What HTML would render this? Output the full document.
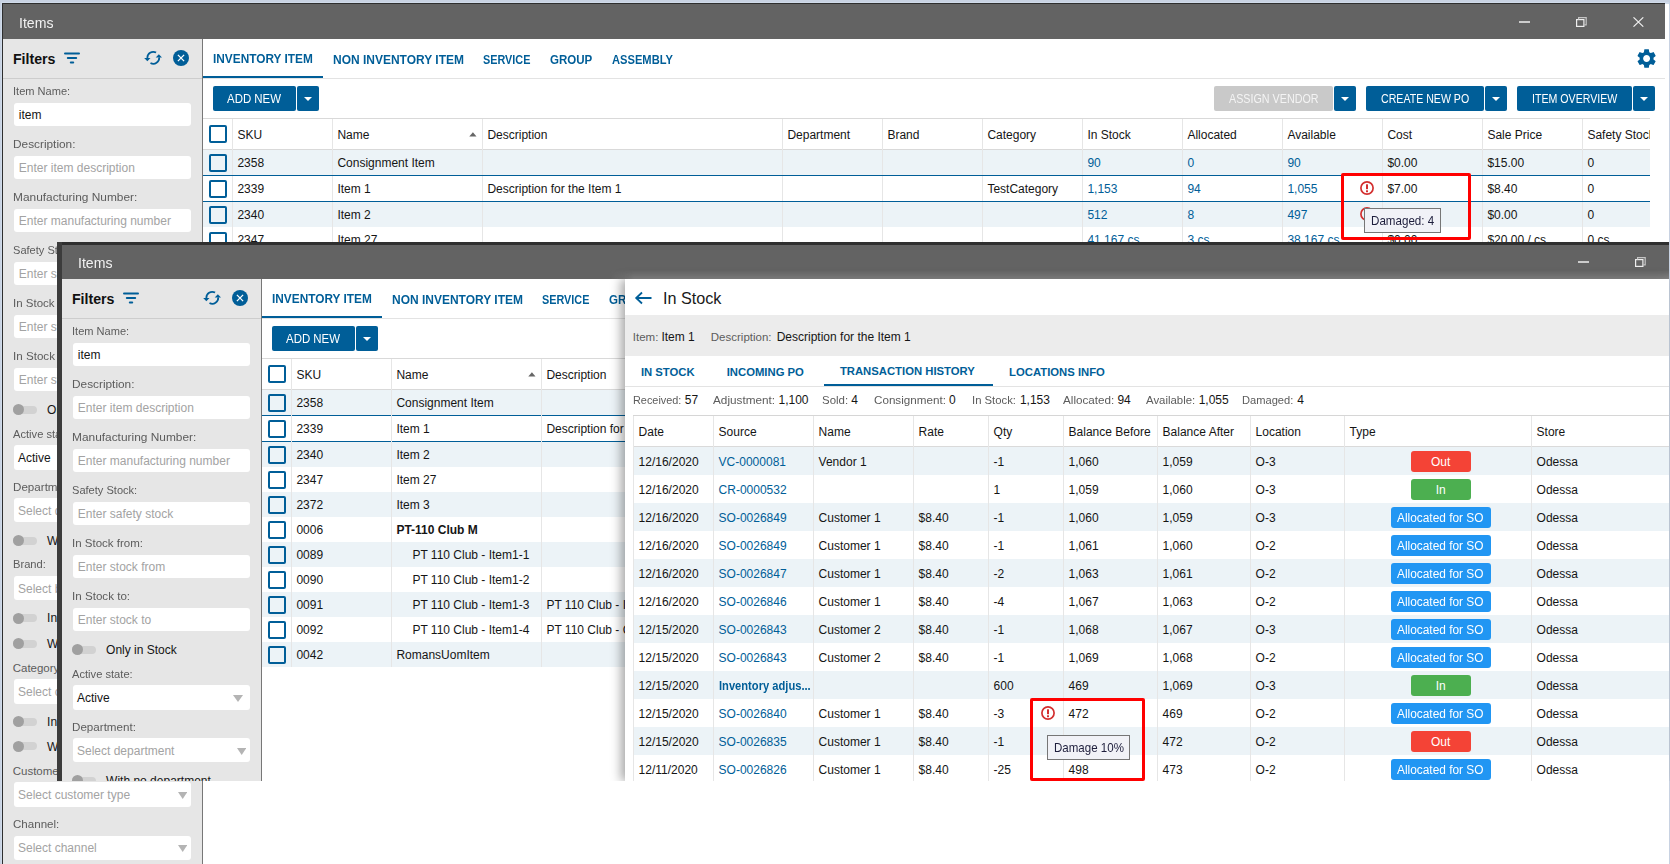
<!DOCTYPE html><html><head><meta charset="utf-8"><title>Items</title><style>
*{margin:0;padding:0;box-sizing:content-box}
html,body{width:1670px;height:864px;overflow:hidden;background:#c8d2e2;font-family:"Liberation Sans",sans-serif}
.r{position:absolute}
.t{position:absolute;white-space:nowrap;font-family:"Liberation Sans",sans-serif}
</style></head><body>
<div class="r" style="left:1px;top:2px;width:1668px;height:1px;background:#d0dbea;"></div>
<div class="r" style="left:1px;top:2px;width:1px;height:862px;background:#d0dbea;"></div>
<div class="r" style="left:2px;top:3px;width:1667px;height:861px;background:#ffffff;"></div>
<div class="r" style="left:2px;top:3px;width:1663px;height:36px;background:#636363;box-sizing:border-box;border-top:1px solid #2e2e2e;"></div>
<div class="r" style="left:2px;top:3px;width:1px;height:861px;background:#2e2e2e;"></div>
<div class="r" style="left:1665px;top:3px;width:4px;height:1px;background:#d0dbea;"></div>
<div class="t" style="left:18.90px;top:14.68px;font-size:14.6px;line-height:17.52px;color:#f2f2f2;transform:scaleX(0.9667);transform-origin:0 0;">Items</div>
<div class="r" style="left:1519.3px;top:21.2px;width:10.5px;height:1.4px;background:#cccccc;"></div>
<svg class="r" style="left:1576px;top:17px" width="11" height="10"><rect x="0.6" y="2.6" width="7.3" height="6.8" fill="none" stroke="#eeeeee" stroke-width="1.2"/><path d="M2.6 2.4 V0.6 H10.2 V7.8 H8.2" fill="none" stroke="#c4c4c4" stroke-width="1.2"/></svg>
<svg class="r" style="left:1633.3px;top:17px" width="11" height="10"><path d="M0.5 0.3 L10.3 9.7 M10.3 0.3 L0.5 9.7" stroke="#f0f0f0" stroke-width="1.1"/></svg>
<div class="r" style="left:3px;top:39px;width:199px;height:825px;background:#e6e6e6;"></div>
<div class="r" style="left:202px;top:39px;width:1px;height:825px;background:#777777;"></div>
<div class="t" style="left:12.90px;top:51.06px;font-size:14.2px;line-height:17.04px;color:#111;font-weight:700;">Filters</div>
<svg class="r" style="left:63px;top:51px" width="18" height="14"><g stroke="#005e98" stroke-width="2" stroke-linecap="round"><line x1="2" y1="2.6" x2="16" y2="2.6"/><line x1="4.8" y1="7" x2="13.2" y2="7"/><line x1="7.8" y1="11.4" x2="10.2" y2="11.4"/></g></svg>
<svg class="r" style="left:143px;top:50px" width="20" height="17"><g fill="none" stroke="#005e98" stroke-width="1.75"><path d="M13.1 2.55 A5.9 5.9 0 0 0 4.4 8.2"/><path d="M7.5 13.0 A5.9 5.9 0 0 0 16.2 7.3"/></g><polygon points="1.2,8.0 7.5,8.0 4.35,11.3" fill="#005e98"/><polygon points="12.7,7.6 19,7.6 15.85,4.3" fill="#005e98"/></svg>
<svg class="r" style="left:173px;top:50px" width="16" height="16"><circle cx="8" cy="8" r="8" fill="#005e98"/><path d="M4.9 4.9 L11.1 11.1 M11.1 4.9 L4.9 11.1" stroke="#fff" stroke-width="1.3"/></svg>
<div class="r" style="left:3px;top:78px;width:199px;height:1px;background:#cdcdcd;"></div>
<div class="t" style="left:12.70px;top:84.62px;font-size:11.5px;line-height:13.8px;color:#5c5c5c;transform:scaleX(0.9624);transform-origin:0 0;">Item Name:</div>
<div class="r" style="left:14px;top:103px;width:177px;height:23px;background:#fff;border-radius:3px;"></div>
<div class="t" style="left:18.80px;top:108.14px;font-size:12px;line-height:14.4px;color:#151515;">item</div>
<div class="t" style="left:12.70px;top:137.62px;font-size:11.5px;line-height:13.8px;color:#5c5c5c;transform:scaleX(1.0293);transform-origin:0 0;">Description:</div>
<div class="r" style="left:14px;top:156px;width:177px;height:23px;background:#fff;border-radius:3px;"></div>
<div class="t" style="left:18.80px;top:161.14px;font-size:12px;line-height:14.4px;color:#a3a3a3;">Enter item description</div>
<div class="t" style="left:12.70px;top:190.62px;font-size:11.5px;line-height:13.8px;color:#5c5c5c;transform:scaleX(1.0344);transform-origin:0 0;">Manufacturing Number:</div>
<div class="r" style="left:14px;top:209px;width:177px;height:23px;background:#fff;border-radius:3px;"></div>
<div class="t" style="left:18.80px;top:214.14px;font-size:12px;line-height:14.4px;color:#a3a3a3;">Enter manufacturing number</div>
<div class="t" style="left:12.70px;top:243.62px;font-size:11.5px;line-height:13.8px;color:#5c5c5c;transform:scaleX(0.9621);transform-origin:0 0;">Safety Stock:</div>
<div class="r" style="left:14px;top:262px;width:177px;height:23px;background:#fff;border-radius:3px;"></div>
<div class="t" style="left:18.80px;top:267.14px;font-size:12px;line-height:14.4px;color:#a3a3a3;">Enter safety stock</div>
<div class="t" style="left:12.70px;top:296.62px;font-size:11.5px;line-height:13.8px;color:#5c5c5c;transform:scaleX(1.0009);transform-origin:0 0;">In Stock from:</div>
<div class="r" style="left:14px;top:315px;width:177px;height:23px;background:#fff;border-radius:3px;"></div>
<div class="t" style="left:18.80px;top:320.14px;font-size:12px;line-height:14.4px;color:#a3a3a3;">Enter stock from</div>
<div class="t" style="left:12.70px;top:349.62px;font-size:11.5px;line-height:13.8px;color:#5c5c5c;transform:scaleX(1.0099);transform-origin:0 0;">In Stock to:</div>
<div class="r" style="left:14px;top:368px;width:177px;height:23px;background:#fff;border-radius:3px;"></div>
<div class="t" style="left:18.80px;top:373.14px;font-size:12px;line-height:14.4px;color:#a3a3a3;">Enter stock to</div>
<div class="r" style="left:13px;top:405.8px;width:24px;height:8px;background:#d2d2d2;border-radius:4px;"></div>
<div class="r" style="left:13px;top:404.3px;width:11px;height:11px;background:#a0a0a0;border-radius:50%;"></div>
<div class="t" style="left:47.10px;top:403.14px;font-size:12px;line-height:14.4px;color:#151515;">Only in Stock</div>
<div class="t" style="left:12.70px;top:427.62px;font-size:11.5px;line-height:13.8px;color:#5c5c5c;transform:scaleX(0.9690);transform-origin:0 0;">Active state:</div>
<div class="r" style="left:14px;top:445.3px;width:177px;height:24.3px;background:#fff;border-radius:3px;"></div>
<div class="t" style="left:18.00px;top:451.14px;font-size:12px;line-height:14.4px;color:#151515;">Active</div>
<svg class="r" style="left:174.2px;top:454.55px" width="10" height="7"><polygon points="0,0 10,0 5.0,7" fill="#b4b4b4"/></svg>
<div class="t" style="left:12.70px;top:480.62px;font-size:11.5px;line-height:13.8px;color:#5c5c5c;transform:scaleX(1.0098);transform-origin:0 0;">Department:</div>
<div class="r" style="left:14px;top:498.4px;width:177px;height:24px;background:#fff;border-radius:3px;"></div>
<div class="t" style="left:18.00px;top:504.14px;font-size:12px;line-height:14.4px;color:#a3a3a3;">Select department</div>
<svg class="r" style="left:177.8px;top:507.5px" width="9.4" height="7"><polygon points="0,0 9.4,0 4.7,7" fill="#b4b4b4"/></svg>
<div class="r" style="left:13px;top:536.5px;width:24px;height:8px;background:#d2d2d2;border-radius:4px;"></div>
<div class="r" style="left:13px;top:535.0px;width:11px;height:11px;background:#a0a0a0;border-radius:50%;"></div>
<div class="t" style="left:47.10px;top:534.14px;font-size:12px;line-height:14.4px;color:#151515;">With no department</div>
<div class="t" style="left:12.70px;top:557.62px;font-size:11.5px;line-height:13.8px;color:#5c5c5c;transform:scaleX(0.9708);transform-origin:0 0;">Brand:</div>
<div class="r" style="left:14px;top:576.2px;width:177px;height:24.2px;background:#fff;border-radius:3px;"></div>
<div class="t" style="left:18.00px;top:582.14px;font-size:12px;line-height:14.4px;color:#a3a3a3;">Select brand</div>
<svg class="r" style="left:177.8px;top:585.4000000000001px" width="9.4" height="7"><polygon points="0,0 9.4,0 4.7,7" fill="#b4b4b4"/></svg>
<div class="r" style="left:13px;top:614.3px;width:24px;height:8px;background:#d2d2d2;border-radius:4px;"></div>
<div class="r" style="left:13px;top:612.8px;width:11px;height:11px;background:#a0a0a0;border-radius:50%;"></div>
<div class="t" style="left:47.10px;top:611.14px;font-size:12px;line-height:14.4px;color:#151515;">Include inactive brands</div>
<div class="r" style="left:13px;top:639.5px;width:24px;height:8px;background:#d2d2d2;border-radius:4px;"></div>
<div class="r" style="left:13px;top:638.0px;width:11px;height:11px;background:#a0a0a0;border-radius:50%;"></div>
<div class="t" style="left:47.10px;top:637.14px;font-size:12px;line-height:14.4px;color:#151515;">With no brand</div>
<div class="t" style="left:12.70px;top:661.62px;font-size:11.5px;line-height:13.8px;color:#5c5c5c;">Category:</div>
<div class="r" style="left:14px;top:679.3px;width:177px;height:24.3px;background:#fff;border-radius:3px;"></div>
<div class="t" style="left:18.00px;top:685.14px;font-size:12px;line-height:14.4px;color:#a3a3a3;">Select category</div>
<svg class="r" style="left:177.8px;top:688.55px" width="9.4" height="7"><polygon points="0,0 9.4,0 4.7,7" fill="#b4b4b4"/></svg>
<div class="r" style="left:13px;top:717.7px;width:24px;height:8px;background:#d2d2d2;border-radius:4px;"></div>
<div class="r" style="left:13px;top:716.2px;width:11px;height:11px;background:#a0a0a0;border-radius:50%;"></div>
<div class="t" style="left:47.10px;top:715.14px;font-size:12px;line-height:14.4px;color:#151515;">Include inactive categories</div>
<div class="r" style="left:13px;top:742.4px;width:24px;height:8px;background:#d2d2d2;border-radius:4px;"></div>
<div class="r" style="left:13px;top:740.9px;width:11px;height:11px;background:#a0a0a0;border-radius:50%;"></div>
<div class="t" style="left:47.10px;top:740.14px;font-size:12px;line-height:14.4px;color:#151515;">With no category</div>
<div class="t" style="left:12.70px;top:764.62px;font-size:11.5px;line-height:13.8px;color:#5c5c5c;">Customer type:</div>
<div class="r" style="left:14px;top:782.3px;width:177px;height:24.3px;background:#fff;border-radius:3px;"></div>
<div class="t" style="left:18.00px;top:788.14px;font-size:12px;line-height:14.4px;color:#a3a3a3;">Select customer type</div>
<svg class="r" style="left:177.8px;top:791.55px" width="9.4" height="7"><polygon points="0,0 9.4,0 4.7,7" fill="#b4b4b4"/></svg>
<div class="t" style="left:12.70px;top:817.62px;font-size:11.5px;line-height:13.8px;color:#5c5c5c;transform:scaleX(1.0055);transform-origin:0 0;">Channel:</div>
<div class="r" style="left:14px;top:835.6px;width:177px;height:24.2px;background:#fff;border-radius:3px;"></div>
<div class="t" style="left:18.00px;top:841.14px;font-size:12px;line-height:14.4px;color:#a3a3a3;">Select channel</div>
<svg class="r" style="left:177.8px;top:844.8000000000001px" width="9.4" height="7"><polygon points="0,0 9.4,0 4.7,7" fill="#b4b4b4"/></svg>
<div class="t" style="left:212.90px;top:51.86px;font-size:12.3px;line-height:14.76px;color:#005e98;font-weight:700;transform:scaleX(0.9629);transform-origin:0 0;">INVENTORY ITEM</div>
<div class="t" style="left:332.80px;top:52.86px;font-size:12.3px;line-height:14.76px;color:#005e98;font-weight:700;transform:scaleX(0.9749);transform-origin:0 0;">NON INVENTORY ITEM</div>
<div class="t" style="left:483.20px;top:52.86px;font-size:12.3px;line-height:14.76px;color:#005e98;font-weight:700;transform:scaleX(0.8816);transform-origin:0 0;">SERVICE</div>
<div class="t" style="left:549.70px;top:52.86px;font-size:12.3px;line-height:14.76px;color:#005e98;font-weight:700;transform:scaleX(0.9380);transform-origin:0 0;">GROUP</div>
<div class="t" style="left:611.70px;top:52.86px;font-size:12.3px;line-height:14.76px;color:#005e98;font-weight:700;transform:scaleX(0.9062);transform-origin:0 0;">ASSEMBLY</div>
<div class="r" style="left:203px;top:78px;width:1462px;height:1px;background:#e3e3e3;"></div>
<div class="r" style="left:203px;top:75.8px;width:120px;height:2.5px;background:#005e98;"></div>
<svg class="r" style="left:1635px;top:46.7px" width="23.2" height="23.2" viewBox="0 0 24 24"><path fill="#005e98" d="M19.14 12.94c.04-.3.06-.61.06-.94 0-.32-.02-.64-.07-.94l2.03-1.58c.18-.14.23-.41.12-.61l-1.92-3.32c-.12-.22-.37-.29-.59-.22l-2.39.96c-.5-.38-1.03-.7-1.62-.94l-.36-2.54c-.04-.24-.24-.41-.48-.41h-3.84c-.24 0-.43.17-.47.41l-.36 2.54c-.59.24-1.13.57-1.62.94l-2.39-.96c-.22-.08-.47 0-.59.22L2.74 8.87c-.12.21-.08.47.12.61l2.03 1.58c-.05.3-.09.63-.09.94s.02.64.07.94l-2.03 1.58c-.18.14-.23.41-.12.61l1.92 3.32c.12.22.37.29.59.22l2.39-.96c.5.38 1.03.7 1.62.94l.36 2.54c.05.24.24.41.48.41h3.84c.24 0 .44-.17.47-.41l.36-2.54c.59-.24 1.13-.56 1.62-.94l2.39.96c.22.08.47 0 .59-.22l1.92-3.32c.12-.22.07-.47-.12-.61l-2.01-1.58zM12 15.6c-1.98 0-3.6-1.62-3.6-3.6s1.62-3.6 3.6-3.6 3.6 1.62 3.6 3.6-1.62 3.6-3.6 3.6z"/></svg>
<div class="r" style="left:213px;top:86px;width:83px;height:25px;background:#005e98;border-radius:2px;"></div>
<div class="t" style="left:227.40px;top:91.95px;font-size:12.2px;line-height:14.64px;color:#fff;transform:scaleX(0.9381);transform-origin:0 0;">ADD NEW</div>
<div class="r" style="left:297.2px;top:86px;width:21.80000000000001px;height:25px;background:#005e98;border-radius:2px;"></div>
<svg class="r" style="left:304.1px;top:97.0px" width="8" height="4"><polygon points="0,0 8,0 4.0,4" fill="#fff"/></svg>
<div class="r" style="left:1214px;top:86px;width:118.5px;height:25px;background:#c9c9c9;border-radius:2px;"></div>
<div class="t" style="left:1229.00px;top:91.95px;font-size:12.2px;line-height:14.64px;color:#f4f4f4;transform:scaleX(0.8819);transform-origin:0 0;">ASSIGN VENDOR</div>
<div class="r" style="left:1333.7px;top:86px;width:22.299999999999955px;height:25px;background:#005e98;border-radius:2px;"></div>
<svg class="r" style="left:1340.85px;top:97.0px" width="8" height="4"><polygon points="0,0 8,0 4.0,4" fill="#fff"/></svg>
<div class="r" style="left:1366px;top:86px;width:118px;height:25px;background:#005e98;border-radius:2px;"></div>
<div class="t" style="left:1381.00px;top:91.95px;font-size:12.2px;line-height:14.64px;color:#fff;transform:scaleX(0.8703);transform-origin:0 0;">CREATE NEW PO</div>
<div class="r" style="left:1485.2px;top:86px;width:21.799999999999955px;height:25px;background:#005e98;border-radius:2px;"></div>
<svg class="r" style="left:1492.1px;top:97.0px" width="8" height="4"><polygon points="0,0 8,0 4.0,4" fill="#fff"/></svg>
<div class="r" style="left:1517px;top:86px;width:115px;height:25px;background:#005e98;border-radius:2px;"></div>
<div class="t" style="left:1531.50px;top:91.95px;font-size:12.2px;line-height:14.64px;color:#fff;transform:scaleX(0.8717);transform-origin:0 0;">ITEM OVERVIEW</div>
<div class="r" style="left:1633.2px;top:86px;width:21.799999999999955px;height:25px;background:#005e98;border-radius:2px;"></div>
<svg class="r" style="left:1640.1px;top:97.0px" width="8" height="4"><polygon points="0,0 8,0 4.0,4" fill="#fff"/></svg>
<div class="r" style="left:203px;top:150px;width:1447px;height:25px;background:#ecf3f7;"></div>
<div class="r" style="left:203px;top:202px;width:1447px;height:25px;background:#ecf3f7;"></div>
<div class="r" style="left:203px;top:118px;width:1447px;height:1px;background:#d9d9d9;"></div>
<div class="r" style="left:203px;top:149px;width:1447px;height:1px;background:#d9d9d9;"></div>
<div class="r" style="left:232px;top:119px;width:1px;height:123px;background:#e6e6e6;"></div>
<div class="r" style="left:332px;top:119px;width:1px;height:123px;background:#e6e6e6;"></div>
<div class="r" style="left:482px;top:119px;width:1px;height:123px;background:#e6e6e6;"></div>
<div class="r" style="left:782px;top:119px;width:1px;height:123px;background:#e6e6e6;"></div>
<div class="r" style="left:882px;top:119px;width:1px;height:123px;background:#e6e6e6;"></div>
<div class="r" style="left:982px;top:119px;width:1px;height:123px;background:#e6e6e6;"></div>
<div class="r" style="left:1082px;top:119px;width:1px;height:123px;background:#e6e6e6;"></div>
<div class="r" style="left:1182px;top:119px;width:1px;height:123px;background:#e6e6e6;"></div>
<div class="r" style="left:1282px;top:119px;width:1px;height:123px;background:#e6e6e6;"></div>
<div class="r" style="left:1382px;top:119px;width:1px;height:123px;background:#e6e6e6;"></div>
<div class="r" style="left:1482px;top:119px;width:1px;height:123px;background:#e6e6e6;"></div>
<div class="r" style="left:1582px;top:119px;width:1px;height:123px;background:#e6e6e6;"></div>
<svg class="r" style="left:469px;top:131.8px" width="8" height="5"><polygon points="0.3,4.6 7.5,4.6 3.9,0.2" fill="#666"/></svg>
<div class="r" style="left:203px;top:175px;width:1447px;height:1px;background:#005e98;"></div>
<div class="r" style="left:203px;top:201px;width:1447px;height:1px;background:#005e98;"></div>
<div class="r" style="left:209px;top:125px;width:14px;height:14px;border:2px solid #005e98;border-radius:2px;background:transparent"></div>
<div class="r" style="left:209px;top:154px;width:14px;height:14px;border:2px solid #005e98;border-radius:2px;background:transparent"></div>
<div class="r" style="left:209px;top:180px;width:14px;height:14px;border:2px solid #005e98;border-radius:2px;background:transparent"></div>
<div class="r" style="left:209px;top:206px;width:14px;height:14px;border:2px solid #005e98;border-radius:2px;background:transparent"></div>
<div class="r" style="left:209px;top:232px;width:14px;height:14px;border:2px solid #005e98;border-radius:2px;background:transparent"></div>
<div class="r" style="left:203px;top:119px;width:1447px;height:123px;overflow:hidden;">
<div class="t" style="left:34.40px;top:9.14px;font-size:12px;line-height:14.4px;color:#151515;">SKU</div>
<div class="t" style="left:134.40px;top:9.14px;font-size:12px;line-height:14.4px;color:#151515;">Name</div>
<div class="t" style="left:284.40px;top:9.14px;font-size:12px;line-height:14.4px;color:#151515;">Description</div>
<div class="t" style="left:584.40px;top:9.14px;font-size:12px;line-height:14.4px;color:#151515;">Department</div>
<div class="t" style="left:684.40px;top:9.14px;font-size:12px;line-height:14.4px;color:#151515;">Brand</div>
<div class="t" style="left:784.40px;top:9.14px;font-size:12px;line-height:14.4px;color:#151515;">Category</div>
<div class="t" style="left:884.40px;top:9.14px;font-size:12px;line-height:14.4px;color:#151515;">In Stock</div>
<div class="t" style="left:984.40px;top:9.14px;font-size:12px;line-height:14.4px;color:#151515;">Allocated</div>
<div class="t" style="left:1084.40px;top:9.14px;font-size:12px;line-height:14.4px;color:#151515;">Available</div>
<div class="t" style="left:1184.40px;top:9.14px;font-size:12px;line-height:14.4px;color:#151515;">Cost</div>
<div class="t" style="left:1284.40px;top:9.14px;font-size:12px;line-height:14.4px;color:#151515;">Sale Price</div>
<div class="t" style="left:1384.40px;top:9.14px;font-size:12px;line-height:14.4px;color:#151515;">Safety Stock</div>
<div class="t" style="left:34.40px;top:37.14px;font-size:12px;line-height:14.4px;color:#151515;">2358</div>
<div class="t" style="left:134.40px;top:37.14px;font-size:12px;line-height:14.4px;color:#151515;">Consignment Item</div>
<div class="t" style="left:884.40px;top:37.14px;font-size:12px;line-height:14.4px;color:#005e98;">90</div>
<div class="t" style="left:984.40px;top:37.14px;font-size:12px;line-height:14.4px;color:#005e98;">0</div>
<div class="t" style="left:1084.40px;top:37.14px;font-size:12px;line-height:14.4px;color:#005e98;">90</div>
<div class="t" style="left:1184.40px;top:37.14px;font-size:12px;line-height:14.4px;color:#151515;">$0.00</div>
<div class="t" style="left:1284.40px;top:37.14px;font-size:12px;line-height:14.4px;color:#151515;">$15.00</div>
<div class="t" style="left:1384.40px;top:37.14px;font-size:12px;line-height:14.4px;color:#151515;">0</div>
<div class="t" style="left:34.40px;top:63.14px;font-size:12px;line-height:14.4px;color:#151515;">2339</div>
<div class="t" style="left:134.40px;top:63.14px;font-size:12px;line-height:14.4px;color:#151515;">Item 1</div>
<div class="t" style="left:284.40px;top:63.14px;font-size:12px;line-height:14.4px;color:#151515;">Description for the Item 1</div>
<div class="t" style="left:784.40px;top:63.14px;font-size:12px;line-height:14.4px;color:#151515;">TestCategory</div>
<div class="t" style="left:884.40px;top:63.14px;font-size:12px;line-height:14.4px;color:#005e98;">1,153</div>
<div class="t" style="left:984.40px;top:63.14px;font-size:12px;line-height:14.4px;color:#005e98;">94</div>
<div class="t" style="left:1084.40px;top:63.14px;font-size:12px;line-height:14.4px;color:#005e98;">1,055</div>
<div class="t" style="left:1184.40px;top:63.14px;font-size:12px;line-height:14.4px;color:#151515;">$7.00</div>
<div class="t" style="left:1284.40px;top:63.14px;font-size:12px;line-height:14.4px;color:#151515;">$8.40</div>
<div class="t" style="left:1384.40px;top:63.14px;font-size:12px;line-height:14.4px;color:#151515;">0</div>
<div class="t" style="left:34.40px;top:89.14px;font-size:12px;line-height:14.4px;color:#151515;">2340</div>
<div class="t" style="left:134.40px;top:89.14px;font-size:12px;line-height:14.4px;color:#151515;">Item 2</div>
<div class="t" style="left:884.40px;top:89.14px;font-size:12px;line-height:14.4px;color:#005e98;">512</div>
<div class="t" style="left:984.40px;top:89.14px;font-size:12px;line-height:14.4px;color:#005e98;">8</div>
<div class="t" style="left:1084.40px;top:89.14px;font-size:12px;line-height:14.4px;color:#005e98;">497</div>
<div class="t" style="left:1184.40px;top:89.14px;font-size:12px;line-height:14.4px;color:#151515;">$0.00</div>
<div class="t" style="left:1284.40px;top:89.14px;font-size:12px;line-height:14.4px;color:#151515;">$0.00</div>
<div class="t" style="left:1384.40px;top:89.14px;font-size:12px;line-height:14.4px;color:#151515;">0</div>
<div class="t" style="left:34.40px;top:114.14px;font-size:12px;line-height:14.4px;color:#151515;">2347</div>
<div class="t" style="left:134.40px;top:114.14px;font-size:12px;line-height:14.4px;color:#151515;">Item 27</div>
<div class="t" style="left:884.40px;top:114.14px;font-size:12px;line-height:14.4px;color:#005e98;">41,167 cs</div>
<div class="t" style="left:984.40px;top:114.14px;font-size:12px;line-height:14.4px;color:#005e98;">3 cs</div>
<div class="t" style="left:1084.40px;top:114.14px;font-size:12px;line-height:14.4px;color:#005e98;">38,167 cs</div>
<div class="t" style="left:1184.40px;top:114.14px;font-size:12px;line-height:14.4px;color:#151515;">$0.00</div>
<div class="t" style="left:1284.40px;top:114.14px;font-size:12px;line-height:14.4px;color:#151515;">$20.00 / cs</div>
<div class="t" style="left:1384.40px;top:114.14px;font-size:12px;line-height:14.4px;color:#151515;">0 cs</div>
</div>
<svg class="r" style="left:1358.6px;top:180.4px" width="16" height="16"><circle cx="8" cy="8" r="6.1" fill="none" stroke="#d32f2f" stroke-width="1.7"/><rect x="7" y="4.3" width="2" height="4.9" fill="#d32f2f"/><rect x="7" y="10.3" width="2" height="1.9" fill="#d32f2f"/></svg>
<svg class="r" style="left:1358.6px;top:206.4px" width="16" height="16"><circle cx="8" cy="8" r="6.1" fill="none" stroke="#d32f2f" stroke-width="1.7"/><rect x="7" y="4.3" width="2" height="4.9" fill="#d32f2f"/><rect x="7" y="10.3" width="2" height="1.9" fill="#d32f2f"/></svg>
<div class="r" style="left:0px;top:0px;width:1670px;height:781px;overflow:hidden;">
<div class="r" style="left:57px;top:242px;width:1612px;height:539px;background:#ffffff;"></div>
<div class="r" style="left:57px;top:242px;width:1612px;height:3px;background:#2f2f2f;"></div>
<div class="r" style="left:57px;top:242px;width:5px;height:539px;background:#3c3c3c;"></div>
<div class="r" style="left:62px;top:245px;width:1607px;height:34px;background:#636363;"></div>
<div class="t" style="left:77.90px;top:254.68px;font-size:14.6px;line-height:17.52px;color:#f2f2f2;transform:scaleX(0.9667);transform-origin:0 0;">Items</div>
<div class="r" style="left:1578px;top:261.2px;width:10.5px;height:1.4px;background:#cccccc;"></div>
<svg class="r" style="left:1635px;top:257px" width="11" height="10"><rect x="0.6" y="2.6" width="7.3" height="6.8" fill="none" stroke="#eeeeee" stroke-width="1.2"/><path d="M2.6 2.4 V0.6 H10.2 V7.8 H8.2" fill="none" stroke="#c4c4c4" stroke-width="1.2"/></svg>
<div class="r" style="left:62px;top:279px;width:199px;height:502px;background:#e6e6e6;"></div>
<div class="r" style="left:261px;top:279px;width:1px;height:502px;background:#777777;"></div>
<div class="t" style="left:71.90px;top:291.06px;font-size:14.2px;line-height:17.04px;color:#111;font-weight:700;">Filters</div>
<svg class="r" style="left:122px;top:291px" width="18" height="14"><g stroke="#005e98" stroke-width="2" stroke-linecap="round"><line x1="2" y1="2.6" x2="16" y2="2.6"/><line x1="4.8" y1="7" x2="13.2" y2="7"/><line x1="7.8" y1="11.4" x2="10.2" y2="11.4"/></g></svg>
<svg class="r" style="left:202px;top:290px" width="20" height="17"><g fill="none" stroke="#005e98" stroke-width="1.75"><path d="M13.1 2.55 A5.9 5.9 0 0 0 4.4 8.2"/><path d="M7.5 13.0 A5.9 5.9 0 0 0 16.2 7.3"/></g><polygon points="1.2,8.0 7.5,8.0 4.35,11.3" fill="#005e98"/><polygon points="12.7,7.6 19,7.6 15.85,4.3" fill="#005e98"/></svg>
<svg class="r" style="left:232px;top:290px" width="16" height="16"><circle cx="8" cy="8" r="8" fill="#005e98"/><path d="M4.9 4.9 L11.1 11.1 M11.1 4.9 L4.9 11.1" stroke="#fff" stroke-width="1.3"/></svg>
<div class="r" style="left:62px;top:318px;width:199px;height:1px;background:#cdcdcd;"></div>
<div class="t" style="left:71.70px;top:324.62px;font-size:11.5px;line-height:13.8px;color:#5c5c5c;transform:scaleX(0.9624);transform-origin:0 0;">Item Name:</div>
<div class="r" style="left:73px;top:343px;width:177px;height:23px;background:#fff;border-radius:3px;"></div>
<div class="t" style="left:77.80px;top:348.14px;font-size:12px;line-height:14.4px;color:#151515;">item</div>
<div class="t" style="left:71.70px;top:377.62px;font-size:11.5px;line-height:13.8px;color:#5c5c5c;transform:scaleX(1.0293);transform-origin:0 0;">Description:</div>
<div class="r" style="left:73px;top:396px;width:177px;height:23px;background:#fff;border-radius:3px;"></div>
<div class="t" style="left:77.80px;top:401.14px;font-size:12px;line-height:14.4px;color:#a3a3a3;">Enter item description</div>
<div class="t" style="left:71.70px;top:430.62px;font-size:11.5px;line-height:13.8px;color:#5c5c5c;transform:scaleX(1.0344);transform-origin:0 0;">Manufacturing Number:</div>
<div class="r" style="left:73px;top:449px;width:177px;height:23px;background:#fff;border-radius:3px;"></div>
<div class="t" style="left:77.80px;top:454.14px;font-size:12px;line-height:14.4px;color:#a3a3a3;">Enter manufacturing number</div>
<div class="t" style="left:71.70px;top:483.62px;font-size:11.5px;line-height:13.8px;color:#5c5c5c;transform:scaleX(0.9621);transform-origin:0 0;">Safety Stock:</div>
<div class="r" style="left:73px;top:502px;width:177px;height:23px;background:#fff;border-radius:3px;"></div>
<div class="t" style="left:77.80px;top:507.14px;font-size:12px;line-height:14.4px;color:#a3a3a3;">Enter safety stock</div>
<div class="t" style="left:71.70px;top:536.62px;font-size:11.5px;line-height:13.8px;color:#5c5c5c;transform:scaleX(1.0009);transform-origin:0 0;">In Stock from:</div>
<div class="r" style="left:73px;top:555px;width:177px;height:23px;background:#fff;border-radius:3px;"></div>
<div class="t" style="left:77.80px;top:560.14px;font-size:12px;line-height:14.4px;color:#a3a3a3;">Enter stock from</div>
<div class="t" style="left:71.70px;top:589.62px;font-size:11.5px;line-height:13.8px;color:#5c5c5c;transform:scaleX(1.0099);transform-origin:0 0;">In Stock to:</div>
<div class="r" style="left:73px;top:608px;width:177px;height:23px;background:#fff;border-radius:3px;"></div>
<div class="t" style="left:77.80px;top:613.14px;font-size:12px;line-height:14.4px;color:#a3a3a3;">Enter stock to</div>
<div class="r" style="left:72px;top:645.8px;width:24px;height:8px;background:#d2d2d2;border-radius:4px;"></div>
<div class="r" style="left:72px;top:644.3px;width:11px;height:11px;background:#a0a0a0;border-radius:50%;"></div>
<div class="t" style="left:106.10px;top:643.14px;font-size:12px;line-height:14.4px;color:#151515;">Only in Stock</div>
<div class="t" style="left:71.70px;top:667.62px;font-size:11.5px;line-height:13.8px;color:#5c5c5c;transform:scaleX(0.9690);transform-origin:0 0;">Active state:</div>
<div class="r" style="left:73px;top:685.3px;width:177px;height:24.3px;background:#fff;border-radius:3px;"></div>
<div class="t" style="left:77.00px;top:691.14px;font-size:12px;line-height:14.4px;color:#151515;">Active</div>
<svg class="r" style="left:233.2px;top:694.55px" width="10" height="7"><polygon points="0,0 10,0 5.0,7" fill="#b4b4b4"/></svg>
<div class="t" style="left:71.70px;top:720.62px;font-size:11.5px;line-height:13.8px;color:#5c5c5c;transform:scaleX(1.0098);transform-origin:0 0;">Department:</div>
<div class="r" style="left:73px;top:738.4px;width:177px;height:24px;background:#fff;border-radius:3px;"></div>
<div class="t" style="left:77.00px;top:744.14px;font-size:12px;line-height:14.4px;color:#a3a3a3;">Select department</div>
<svg class="r" style="left:236.8px;top:747.5px" width="9.4" height="7"><polygon points="0,0 9.4,0 4.7,7" fill="#b4b4b4"/></svg>
<div class="r" style="left:72px;top:776.5px;width:24px;height:8px;background:#d2d2d2;border-radius:4px;"></div>
<div class="r" style="left:72px;top:775.0px;width:11px;height:11px;background:#a0a0a0;border-radius:50%;"></div>
<div class="t" style="left:106.10px;top:774.14px;font-size:12px;line-height:14.4px;color:#151515;">With no department</div>
<div class="t" style="left:71.70px;top:797.62px;font-size:11.5px;line-height:13.8px;color:#5c5c5c;transform:scaleX(0.9708);transform-origin:0 0;">Brand:</div>
<div class="r" style="left:73px;top:816.2px;width:177px;height:24.2px;background:#fff;border-radius:3px;"></div>
<div class="t" style="left:77.00px;top:822.14px;font-size:12px;line-height:14.4px;color:#a3a3a3;">Select brand</div>
<svg class="r" style="left:236.8px;top:825.4000000000001px" width="9.4" height="7"><polygon points="0,0 9.4,0 4.7,7" fill="#b4b4b4"/></svg>
<div class="r" style="left:72px;top:854.3px;width:24px;height:8px;background:#d2d2d2;border-radius:4px;"></div>
<div class="r" style="left:72px;top:852.8px;width:11px;height:11px;background:#a0a0a0;border-radius:50%;"></div>
<div class="t" style="left:106.10px;top:851.14px;font-size:12px;line-height:14.4px;color:#151515;">Include inactive brands</div>
<div class="r" style="left:72px;top:879.5px;width:24px;height:8px;background:#d2d2d2;border-radius:4px;"></div>
<div class="r" style="left:72px;top:878.0px;width:11px;height:11px;background:#a0a0a0;border-radius:50%;"></div>
<div class="t" style="left:106.10px;top:877.14px;font-size:12px;line-height:14.4px;color:#151515;">With no brand</div>
<div class="t" style="left:71.70px;top:901.62px;font-size:11.5px;line-height:13.8px;color:#5c5c5c;">Category:</div>
<div class="r" style="left:73px;top:919.3px;width:177px;height:24.3px;background:#fff;border-radius:3px;"></div>
<div class="t" style="left:77.00px;top:925.14px;font-size:12px;line-height:14.4px;color:#a3a3a3;">Select category</div>
<svg class="r" style="left:236.8px;top:928.55px" width="9.4" height="7"><polygon points="0,0 9.4,0 4.7,7" fill="#b4b4b4"/></svg>
<div class="r" style="left:72px;top:957.7px;width:24px;height:8px;background:#d2d2d2;border-radius:4px;"></div>
<div class="r" style="left:72px;top:956.2px;width:11px;height:11px;background:#a0a0a0;border-radius:50%;"></div>
<div class="t" style="left:106.10px;top:955.14px;font-size:12px;line-height:14.4px;color:#151515;">Include inactive categories</div>
<div class="r" style="left:72px;top:982.4px;width:24px;height:8px;background:#d2d2d2;border-radius:4px;"></div>
<div class="r" style="left:72px;top:980.9px;width:11px;height:11px;background:#a0a0a0;border-radius:50%;"></div>
<div class="t" style="left:106.10px;top:980.14px;font-size:12px;line-height:14.4px;color:#151515;">With no category</div>
<div class="t" style="left:71.70px;top:1004.62px;font-size:11.5px;line-height:13.8px;color:#5c5c5c;">Customer type:</div>
<div class="r" style="left:73px;top:1022.3px;width:177px;height:24.3px;background:#fff;border-radius:3px;"></div>
<div class="t" style="left:77.00px;top:1028.14px;font-size:12px;line-height:14.4px;color:#a3a3a3;">Select customer type</div>
<svg class="r" style="left:236.8px;top:1031.55px" width="9.4" height="7"><polygon points="0,0 9.4,0 4.7,7" fill="#b4b4b4"/></svg>
<div class="t" style="left:71.70px;top:1057.62px;font-size:11.5px;line-height:13.8px;color:#5c5c5c;transform:scaleX(1.0055);transform-origin:0 0;">Channel:</div>
<div class="r" style="left:73px;top:1075.6px;width:177px;height:24.2px;background:#fff;border-radius:3px;"></div>
<div class="t" style="left:77.00px;top:1081.14px;font-size:12px;line-height:14.4px;color:#a3a3a3;">Select channel</div>
<svg class="r" style="left:236.8px;top:1084.7999999999997px" width="9.4" height="7"><polygon points="0,0 9.4,0 4.7,7" fill="#b4b4b4"/></svg>
<div class="t" style="left:271.90px;top:291.86px;font-size:12.3px;line-height:14.76px;color:#005e98;font-weight:700;transform:scaleX(0.9629);transform-origin:0 0;">INVENTORY ITEM</div>
<div class="t" style="left:391.80px;top:292.86px;font-size:12.3px;line-height:14.76px;color:#005e98;font-weight:700;transform:scaleX(0.9749);transform-origin:0 0;">NON INVENTORY ITEM</div>
<div class="t" style="left:542.20px;top:292.86px;font-size:12.3px;line-height:14.76px;color:#005e98;font-weight:700;transform:scaleX(0.8816);transform-origin:0 0;">SERVICE</div>
<div class="t" style="left:608.70px;top:292.86px;font-size:12.3px;line-height:14.76px;color:#005e98;font-weight:700;transform:scaleX(0.9380);transform-origin:0 0;">GROUP</div>
<div class="r" style="left:262px;top:318px;width:400px;height:1px;background:#e3e3e3;"></div>
<div class="r" style="left:262px;top:315.8px;width:120px;height:2.5px;background:#005e98;"></div>
<div class="r" style="left:272px;top:326px;width:83px;height:25px;background:#005e98;border-radius:2px;"></div>
<div class="t" style="left:286.40px;top:331.95px;font-size:12.2px;line-height:14.64px;color:#fff;transform:scaleX(0.9381);transform-origin:0 0;">ADD NEW</div>
<div class="r" style="left:356.2px;top:326px;width:21.80000000000001px;height:25px;background:#005e98;border-radius:2px;"></div>
<svg class="r" style="left:363.1px;top:337.0px" width="8" height="4"><polygon points="0,0 8,0 4.0,4" fill="#fff"/></svg>
<div class="r" style="left:262px;top:390px;width:363px;height:25px;background:#ecf3f7;"></div>
<div class="r" style="left:262px;top:442px;width:363px;height:25px;background:#ecf3f7;"></div>
<div class="r" style="left:262px;top:492px;width:363px;height:25px;background:#ecf3f7;"></div>
<div class="r" style="left:262px;top:542px;width:363px;height:25px;background:#ecf3f7;"></div>
<div class="r" style="left:262px;top:592px;width:363px;height:25px;background:#ecf3f7;"></div>
<div class="r" style="left:262px;top:642px;width:363px;height:25px;background:#ecf3f7;"></div>
<div class="r" style="left:262px;top:358px;width:363px;height:1px;background:#d9d9d9;"></div>
<div class="r" style="left:262px;top:389px;width:363px;height:1px;background:#d9d9d9;"></div>
<div class="r" style="left:262px;top:415px;width:363px;height:1px;background:#005e98;"></div>
<div class="r" style="left:262px;top:441px;width:363px;height:1px;background:#005e98;"></div>
<div class="r" style="left:291px;top:359px;width:1px;height:308px;background:#e6e6e6;"></div>
<div class="r" style="left:391px;top:359px;width:1px;height:308px;background:#e6e6e6;"></div>
<div class="r" style="left:541px;top:359px;width:1px;height:308px;background:#e6e6e6;"></div>
<div class="r" style="left:841px;top:359px;width:1px;height:308px;background:#e6e6e6;"></div>
<div class="r" style="left:268px;top:365px;width:14px;height:14px;border:2px solid #005e98;border-radius:2px;background:transparent"></div>
<svg class="r" style="left:528px;top:371.8px" width="8" height="5"><polygon points="0.3,4.6 7.5,4.6 3.9,0.2" fill="#666"/></svg>
<div class="r" style="left:268px;top:394px;width:14px;height:14px;border:2px solid #005e98;border-radius:2px;background:transparent"></div>
<div class="r" style="left:268px;top:420px;width:14px;height:14px;border:2px solid #005e98;border-radius:2px;background:transparent"></div>
<div class="r" style="left:268px;top:446px;width:14px;height:14px;border:2px solid #005e98;border-radius:2px;background:transparent"></div>
<div class="r" style="left:268px;top:471px;width:14px;height:14px;border:2px solid #005e98;border-radius:2px;background:transparent"></div>
<div class="r" style="left:268px;top:496px;width:14px;height:14px;border:2px solid #005e98;border-radius:2px;background:transparent"></div>
<div class="r" style="left:268px;top:521px;width:14px;height:14px;border:2px solid #005e98;border-radius:2px;background:transparent"></div>
<div class="r" style="left:268px;top:546px;width:14px;height:14px;border:2px solid #005e98;border-radius:2px;background:transparent"></div>
<div class="r" style="left:268px;top:571px;width:14px;height:14px;border:2px solid #005e98;border-radius:2px;background:transparent"></div>
<div class="r" style="left:268px;top:596px;width:14px;height:14px;border:2px solid #005e98;border-radius:2px;background:transparent"></div>
<div class="r" style="left:268px;top:621px;width:14px;height:14px;border:2px solid #005e98;border-radius:2px;background:transparent"></div>
<div class="r" style="left:268px;top:646px;width:14px;height:14px;border:2px solid #005e98;border-radius:2px;background:transparent"></div>
<div class="t" style="left:296.40px;top:368.14px;font-size:12px;line-height:14.4px;color:#151515;">SKU</div>
<div class="t" style="left:396.40px;top:368.14px;font-size:12px;line-height:14.4px;color:#151515;">Name</div>
<div class="t" style="left:546.40px;top:368.14px;font-size:12px;line-height:14.4px;color:#151515;">Description</div>
<div class="t" style="left:296.40px;top:396.14px;font-size:12px;line-height:14.4px;color:#151515;">2358</div>
<div class="t" style="left:396.40px;top:396.14px;font-size:12px;line-height:14.4px;color:#151515;">Consignment Item</div>
<div class="t" style="left:296.40px;top:422.14px;font-size:12px;line-height:14.4px;color:#151515;">2339</div>
<div class="t" style="left:396.40px;top:422.14px;font-size:12px;line-height:14.4px;color:#151515;">Item 1</div>
<div class="t" style="left:546.40px;top:422.14px;font-size:12px;line-height:14.4px;color:#151515;">Description for the Item 1</div>
<div class="t" style="left:296.40px;top:448.14px;font-size:12px;line-height:14.4px;color:#151515;">2340</div>
<div class="t" style="left:396.40px;top:448.14px;font-size:12px;line-height:14.4px;color:#151515;">Item 2</div>
<div class="t" style="left:296.40px;top:473.14px;font-size:12px;line-height:14.4px;color:#151515;">2347</div>
<div class="t" style="left:396.40px;top:473.14px;font-size:12px;line-height:14.4px;color:#151515;">Item 27</div>
<div class="t" style="left:296.40px;top:498.14px;font-size:12px;line-height:14.4px;color:#151515;">2372</div>
<div class="t" style="left:396.40px;top:498.14px;font-size:12px;line-height:14.4px;color:#151515;">Item 3</div>
<div class="t" style="left:296.40px;top:523.14px;font-size:12px;line-height:14.4px;color:#151515;">0006</div>
<div class="t" style="left:396.40px;top:523.14px;font-size:12px;line-height:14.4px;color:#151515;font-weight:700;">PT-110 Club M</div>
<div class="t" style="left:296.40px;top:548.14px;font-size:12px;line-height:14.4px;color:#151515;">0089</div>
<div class="t" style="left:412.40px;top:548.14px;font-size:12px;line-height:14.4px;color:#151515;">PT 110 Club - Item1-1</div>
<div class="t" style="left:296.40px;top:573.14px;font-size:12px;line-height:14.4px;color:#151515;">0090</div>
<div class="t" style="left:412.40px;top:573.14px;font-size:12px;line-height:14.4px;color:#151515;">PT 110 Club - Item1-2</div>
<div class="t" style="left:296.40px;top:598.14px;font-size:12px;line-height:14.4px;color:#151515;">0091</div>
<div class="t" style="left:412.40px;top:598.14px;font-size:12px;line-height:14.4px;color:#151515;">PT 110 Club - Item1-3</div>
<div class="t" style="left:546.40px;top:598.14px;font-size:12px;line-height:14.4px;color:#151515;">PT 110 Club - Item1-3</div>
<div class="t" style="left:296.40px;top:623.14px;font-size:12px;line-height:14.4px;color:#151515;">0092</div>
<div class="t" style="left:412.40px;top:623.14px;font-size:12px;line-height:14.4px;color:#151515;">PT 110 Club - Item1-4</div>
<div class="t" style="left:546.40px;top:623.14px;font-size:12px;line-height:14.4px;color:#151515;">PT 110 Club - Component</div>
<div class="t" style="left:296.40px;top:648.14px;font-size:12px;line-height:14.4px;color:#151515;">0042</div>
<div class="t" style="left:396.40px;top:648.14px;font-size:12px;line-height:14.4px;color:#151515;">RomansUomItem</div>
<div class="r" style="left:625px;top:279px;width:1044px;height:502px;background:#fff;box-shadow:-4px 0 10px rgba(0,0,0,0.35)"></div>
<div class="r" style="left:610px;top:270px;width:1059px;height:9px;background:linear-gradient(to bottom, rgba(150,150,150,0), rgba(150,150,150,0.6));-webkit-mask-image:linear-gradient(to right, transparent 0px, #000 24px);mask-image:linear-gradient(to right, transparent 0px, #000 24px);"></div>
<div class="r" style="left:625px;top:279px;width:1044px;height:502px;background:#fff;"></div>
<svg class="r" style="left:634px;top:291px" width="19" height="14"><path d="M17.5 7 H2.5 M8 1.5 L2.2 7 L8 12.5" fill="none" stroke="#005e98" stroke-width="1.8"/></svg>
<div class="t" style="left:662.90px;top:289.17px;font-size:16.2px;line-height:19.44px;color:#1a1a1a;">In Stock</div>
<div class="r" style="left:625px;top:315px;width:1044px;height:41px;background:#ececec;"></div>
<div class="t" style="left:632.80px;top:330.62px;font-size:11.5px;line-height:13.8px;color:#5c5c5c;">Item:</div>
<div class="t" style="left:661.40px;top:330.14px;font-size:12px;line-height:14.4px;color:#151515;">Item 1</div>
<div class="t" style="left:710.80px;top:330.62px;font-size:11.5px;line-height:13.8px;color:#5c5c5c;">Description:</div>
<div class="t" style="left:776.70px;top:330.14px;font-size:12px;line-height:14.4px;color:#151515;">Description for the Item 1</div>
<div class="t" style="left:640.90px;top:365.80px;font-size:11.3px;line-height:13.56px;color:#005e98;font-weight:700;">IN STOCK</div>
<div class="t" style="left:726.70px;top:365.80px;font-size:11.3px;line-height:13.56px;color:#005e98;font-weight:700;">INCOMING PO</div>
<div class="t" style="left:839.90px;top:364.80px;font-size:11.3px;line-height:13.56px;color:#005e98;font-weight:700;">TRANSACTION HISTORY</div>
<div class="t" style="left:1009.10px;top:365.80px;font-size:11.3px;line-height:13.56px;color:#005e98;font-weight:700;">LOCATIONS INFO</div>
<div class="r" style="left:625px;top:386px;width:1044px;height:1px;background:#e3e3e3;"></div>
<div class="r" style="left:824px;top:383.7px;width:169px;height:2.5px;background:#005e98;"></div>
<div class="t" style="left:632.50px;top:393.62px;font-size:11.5px;line-height:13.8px;color:#5c5c5c;transform:scaleX(0.9464);transform-origin:0 0;">Received:</div>
<div class="t" style="left:684.80px;top:393.14px;font-size:12px;line-height:14.4px;color:#151515;">57</div>
<div class="t" style="left:712.50px;top:393.62px;font-size:11.5px;line-height:13.8px;color:#5c5c5c;transform:scaleX(1.0225);transform-origin:0 0;">Adjustment:</div>
<div class="t" style="left:778.50px;top:393.14px;font-size:12px;line-height:14.4px;color:#151515;">1,100</div>
<div class="t" style="left:821.80px;top:393.62px;font-size:11.5px;line-height:13.8px;color:#5c5c5c;transform:scaleX(0.9955);transform-origin:0 0;">Sold:</div>
<div class="t" style="left:851.30px;top:393.14px;font-size:12px;line-height:14.4px;color:#151515;">4</div>
<div class="t" style="left:874.10px;top:393.62px;font-size:11.5px;line-height:13.8px;color:#5c5c5c;transform:scaleX(1.0131);transform-origin:0 0;">Consignment:</div>
<div class="t" style="left:949.10px;top:393.14px;font-size:12px;line-height:14.4px;color:#151515;">0</div>
<div class="t" style="left:971.70px;top:393.62px;font-size:11.5px;line-height:13.8px;color:#5c5c5c;transform:scaleX(0.9832);transform-origin:0 0;">In Stock:</div>
<div class="t" style="left:1019.90px;top:393.14px;font-size:12px;line-height:14.4px;color:#151515;">1,153</div>
<div class="t" style="left:1062.50px;top:393.62px;font-size:11.5px;line-height:13.8px;color:#5c5c5c;transform:scaleX(1.0155);transform-origin:0 0;">Allocated:</div>
<div class="t" style="left:1117.40px;top:393.14px;font-size:12px;line-height:14.4px;color:#151515;">94</div>
<div class="t" style="left:1145.70px;top:393.62px;font-size:11.5px;line-height:13.8px;color:#5c5c5c;transform:scaleX(0.9908);transform-origin:0 0;">Available:</div>
<div class="t" style="left:1198.70px;top:393.14px;font-size:12px;line-height:14.4px;color:#151515;">1,055</div>
<div class="t" style="left:1242.10px;top:393.62px;font-size:11.5px;line-height:13.8px;color:#5c5c5c;transform:scaleX(0.9668);transform-origin:0 0;">Damaged:</div>
<div class="t" style="left:1297.20px;top:393.14px;font-size:12px;line-height:14.4px;color:#151515;">4</div>
<div class="r" style="left:633px;top:415px;width:1036px;height:1px;background:#d6d6d6;"></div>
<div class="r" style="left:633px;top:446px;width:1036px;height:1px;background:#dadada;"></div>
<div class="r" style="left:633px;top:447px;width:1036px;height:28px;background:#ecf3f7;"></div>
<div class="r" style="left:633px;top:503px;width:1036px;height:28px;background:#ecf3f7;"></div>
<div class="r" style="left:633px;top:559px;width:1036px;height:28px;background:#ecf3f7;"></div>
<div class="r" style="left:633px;top:615px;width:1036px;height:28px;background:#ecf3f7;"></div>
<div class="r" style="left:633px;top:671px;width:1036px;height:28px;background:#ecf3f7;"></div>
<div class="r" style="left:633px;top:727px;width:1036px;height:28px;background:#ecf3f7;"></div>
<div class="r" style="left:633px;top:416px;width:1px;height:365px;background:#e6e6e6;"></div>
<div class="r" style="left:713px;top:416px;width:1px;height:365px;background:#e6e6e6;"></div>
<div class="r" style="left:813px;top:416px;width:1px;height:365px;background:#e6e6e6;"></div>
<div class="r" style="left:913px;top:416px;width:1px;height:365px;background:#e6e6e6;"></div>
<div class="r" style="left:988px;top:416px;width:1px;height:365px;background:#e6e6e6;"></div>
<div class="r" style="left:1063px;top:416px;width:1px;height:365px;background:#e6e6e6;"></div>
<div class="r" style="left:1157px;top:416px;width:1px;height:365px;background:#e6e6e6;"></div>
<div class="r" style="left:1250px;top:416px;width:1px;height:365px;background:#e6e6e6;"></div>
<div class="r" style="left:1344px;top:416px;width:1px;height:365px;background:#e6e6e6;"></div>
<div class="r" style="left:1531px;top:416px;width:1px;height:365px;background:#e6e6e6;"></div>
<div class="t" style="left:638.60px;top:425.14px;font-size:12px;line-height:14.4px;color:#151515;">Date</div>
<div class="t" style="left:718.60px;top:425.14px;font-size:12px;line-height:14.4px;color:#151515;">Source</div>
<div class="t" style="left:818.60px;top:425.14px;font-size:12px;line-height:14.4px;color:#151515;">Name</div>
<div class="t" style="left:918.60px;top:425.14px;font-size:12px;line-height:14.4px;color:#151515;">Rate</div>
<div class="t" style="left:993.60px;top:425.14px;font-size:12px;line-height:14.4px;color:#151515;">Qty</div>
<div class="t" style="left:1068.60px;top:425.14px;font-size:12px;line-height:14.4px;color:#151515;">Balance Before</div>
<div class="t" style="left:1162.60px;top:425.14px;font-size:12px;line-height:14.4px;color:#151515;">Balance After</div>
<div class="t" style="left:1255.60px;top:425.14px;font-size:12px;line-height:14.4px;color:#151515;">Location</div>
<div class="t" style="left:1349.60px;top:425.14px;font-size:12px;line-height:14.4px;color:#151515;">Type</div>
<div class="t" style="left:1536.60px;top:425.14px;font-size:12px;line-height:14.4px;color:#151515;">Store</div>
<div class="t" style="left:638.60px;top:455.14px;font-size:12px;line-height:14.4px;color:#151515;">12/16/2020</div>
<div class="t" style="left:718.60px;top:455.14px;font-size:12px;line-height:14.4px;color:#005e98;">VC-0000081</div>
<div class="t" style="left:818.60px;top:455.14px;font-size:12px;line-height:14.4px;color:#151515;">Vendor 1</div>
<div class="t" style="left:993.60px;top:455.14px;font-size:12px;line-height:14.4px;color:#151515;">-1</div>
<div class="t" style="left:1068.60px;top:455.14px;font-size:12px;line-height:14.4px;color:#151515;">1,060</div>
<div class="t" style="left:1162.60px;top:455.14px;font-size:12px;line-height:14.4px;color:#151515;">1,059</div>
<div class="t" style="left:1255.60px;top:455.14px;font-size:12px;line-height:14.4px;color:#151515;">O-3</div>
<div class="r" style="left:1410.7px;top:450.7px;width:60px;height:21px;background:#f44336;border-radius:3px;"></div>
<div class="t" style="left:1410.70px;top:455.14px;font-size:12px;line-height:14.4px;color:#fff;width:60px;text-align:center;">Out</div>
<div class="t" style="left:1536.60px;top:455.14px;font-size:12px;line-height:14.4px;color:#151515;">Odessa</div>
<div class="t" style="left:638.60px;top:483.14px;font-size:12px;line-height:14.4px;color:#151515;">12/16/2020</div>
<div class="t" style="left:718.60px;top:483.14px;font-size:12px;line-height:14.4px;color:#005e98;">CR-0000532</div>
<div class="t" style="left:993.60px;top:483.14px;font-size:12px;line-height:14.4px;color:#151515;">1</div>
<div class="t" style="left:1068.60px;top:483.14px;font-size:12px;line-height:14.4px;color:#151515;">1,059</div>
<div class="t" style="left:1162.60px;top:483.14px;font-size:12px;line-height:14.4px;color:#151515;">1,060</div>
<div class="t" style="left:1255.60px;top:483.14px;font-size:12px;line-height:14.4px;color:#151515;">O-3</div>
<div class="r" style="left:1410.7px;top:478.7px;width:60px;height:21px;background:#4caf50;border-radius:3px;"></div>
<div class="t" style="left:1410.70px;top:483.14px;font-size:12px;line-height:14.4px;color:#fff;width:60px;text-align:center;">In</div>
<div class="t" style="left:1536.60px;top:483.14px;font-size:12px;line-height:14.4px;color:#151515;">Odessa</div>
<div class="t" style="left:638.60px;top:511.14px;font-size:12px;line-height:14.4px;color:#151515;">12/16/2020</div>
<div class="t" style="left:718.60px;top:511.14px;font-size:12px;line-height:14.4px;color:#005e98;">SO-0026849</div>
<div class="t" style="left:818.60px;top:511.14px;font-size:12px;line-height:14.4px;color:#151515;">Customer 1</div>
<div class="t" style="left:918.60px;top:511.14px;font-size:12px;line-height:14.4px;color:#151515;">$8.40</div>
<div class="t" style="left:993.60px;top:511.14px;font-size:12px;line-height:14.4px;color:#151515;">-1</div>
<div class="t" style="left:1068.60px;top:511.14px;font-size:12px;line-height:14.4px;color:#151515;">1,060</div>
<div class="t" style="left:1162.60px;top:511.14px;font-size:12px;line-height:14.4px;color:#151515;">1,059</div>
<div class="t" style="left:1255.60px;top:511.14px;font-size:12px;line-height:14.4px;color:#151515;">O-3</div>
<div class="r" style="left:1390.9px;top:506.7px;width:99.8px;height:21px;background:#2196f3;border-radius:3px;"></div>
<div class="t" style="left:1397.30px;top:511.14px;font-size:12px;line-height:14.4px;color:#fff;transform:scaleX(0.9900);transform-origin:0 0;">Allocated for SO</div>
<div class="t" style="left:1536.60px;top:511.14px;font-size:12px;line-height:14.4px;color:#151515;">Odessa</div>
<div class="t" style="left:638.60px;top:539.14px;font-size:12px;line-height:14.4px;color:#151515;">12/16/2020</div>
<div class="t" style="left:718.60px;top:539.14px;font-size:12px;line-height:14.4px;color:#005e98;">SO-0026849</div>
<div class="t" style="left:818.60px;top:539.14px;font-size:12px;line-height:14.4px;color:#151515;">Customer 1</div>
<div class="t" style="left:918.60px;top:539.14px;font-size:12px;line-height:14.4px;color:#151515;">$8.40</div>
<div class="t" style="left:993.60px;top:539.14px;font-size:12px;line-height:14.4px;color:#151515;">-1</div>
<div class="t" style="left:1068.60px;top:539.14px;font-size:12px;line-height:14.4px;color:#151515;">1,061</div>
<div class="t" style="left:1162.60px;top:539.14px;font-size:12px;line-height:14.4px;color:#151515;">1,060</div>
<div class="t" style="left:1255.60px;top:539.14px;font-size:12px;line-height:14.4px;color:#151515;">O-2</div>
<div class="r" style="left:1390.9px;top:534.7px;width:99.8px;height:21px;background:#2196f3;border-radius:3px;"></div>
<div class="t" style="left:1397.30px;top:539.14px;font-size:12px;line-height:14.4px;color:#fff;transform:scaleX(0.9900);transform-origin:0 0;">Allocated for SO</div>
<div class="t" style="left:1536.60px;top:539.14px;font-size:12px;line-height:14.4px;color:#151515;">Odessa</div>
<div class="t" style="left:638.60px;top:567.14px;font-size:12px;line-height:14.4px;color:#151515;">12/16/2020</div>
<div class="t" style="left:718.60px;top:567.14px;font-size:12px;line-height:14.4px;color:#005e98;">SO-0026847</div>
<div class="t" style="left:818.60px;top:567.14px;font-size:12px;line-height:14.4px;color:#151515;">Customer 1</div>
<div class="t" style="left:918.60px;top:567.14px;font-size:12px;line-height:14.4px;color:#151515;">$8.40</div>
<div class="t" style="left:993.60px;top:567.14px;font-size:12px;line-height:14.4px;color:#151515;">-2</div>
<div class="t" style="left:1068.60px;top:567.14px;font-size:12px;line-height:14.4px;color:#151515;">1,063</div>
<div class="t" style="left:1162.60px;top:567.14px;font-size:12px;line-height:14.4px;color:#151515;">1,061</div>
<div class="t" style="left:1255.60px;top:567.14px;font-size:12px;line-height:14.4px;color:#151515;">O-2</div>
<div class="r" style="left:1390.9px;top:562.7px;width:99.8px;height:21px;background:#2196f3;border-radius:3px;"></div>
<div class="t" style="left:1397.30px;top:567.14px;font-size:12px;line-height:14.4px;color:#fff;transform:scaleX(0.9900);transform-origin:0 0;">Allocated for SO</div>
<div class="t" style="left:1536.60px;top:567.14px;font-size:12px;line-height:14.4px;color:#151515;">Odessa</div>
<div class="t" style="left:638.60px;top:595.14px;font-size:12px;line-height:14.4px;color:#151515;">12/16/2020</div>
<div class="t" style="left:718.60px;top:595.14px;font-size:12px;line-height:14.4px;color:#005e98;">SO-0026846</div>
<div class="t" style="left:818.60px;top:595.14px;font-size:12px;line-height:14.4px;color:#151515;">Customer 1</div>
<div class="t" style="left:918.60px;top:595.14px;font-size:12px;line-height:14.4px;color:#151515;">$8.40</div>
<div class="t" style="left:993.60px;top:595.14px;font-size:12px;line-height:14.4px;color:#151515;">-4</div>
<div class="t" style="left:1068.60px;top:595.14px;font-size:12px;line-height:14.4px;color:#151515;">1,067</div>
<div class="t" style="left:1162.60px;top:595.14px;font-size:12px;line-height:14.4px;color:#151515;">1,063</div>
<div class="t" style="left:1255.60px;top:595.14px;font-size:12px;line-height:14.4px;color:#151515;">O-2</div>
<div class="r" style="left:1390.9px;top:590.7px;width:99.8px;height:21px;background:#2196f3;border-radius:3px;"></div>
<div class="t" style="left:1397.30px;top:595.14px;font-size:12px;line-height:14.4px;color:#fff;transform:scaleX(0.9900);transform-origin:0 0;">Allocated for SO</div>
<div class="t" style="left:1536.60px;top:595.14px;font-size:12px;line-height:14.4px;color:#151515;">Odessa</div>
<div class="t" style="left:638.60px;top:623.14px;font-size:12px;line-height:14.4px;color:#151515;">12/15/2020</div>
<div class="t" style="left:718.60px;top:623.14px;font-size:12px;line-height:14.4px;color:#005e98;">SO-0026843</div>
<div class="t" style="left:818.60px;top:623.14px;font-size:12px;line-height:14.4px;color:#151515;">Customer 2</div>
<div class="t" style="left:918.60px;top:623.14px;font-size:12px;line-height:14.4px;color:#151515;">$8.40</div>
<div class="t" style="left:993.60px;top:623.14px;font-size:12px;line-height:14.4px;color:#151515;">-1</div>
<div class="t" style="left:1068.60px;top:623.14px;font-size:12px;line-height:14.4px;color:#151515;">1,068</div>
<div class="t" style="left:1162.60px;top:623.14px;font-size:12px;line-height:14.4px;color:#151515;">1,067</div>
<div class="t" style="left:1255.60px;top:623.14px;font-size:12px;line-height:14.4px;color:#151515;">O-3</div>
<div class="r" style="left:1390.9px;top:618.7px;width:99.8px;height:21px;background:#2196f3;border-radius:3px;"></div>
<div class="t" style="left:1397.30px;top:623.14px;font-size:12px;line-height:14.4px;color:#fff;transform:scaleX(0.9900);transform-origin:0 0;">Allocated for SO</div>
<div class="t" style="left:1536.60px;top:623.14px;font-size:12px;line-height:14.4px;color:#151515;">Odessa</div>
<div class="t" style="left:638.60px;top:651.14px;font-size:12px;line-height:14.4px;color:#151515;">12/15/2020</div>
<div class="t" style="left:718.60px;top:651.14px;font-size:12px;line-height:14.4px;color:#005e98;">SO-0026843</div>
<div class="t" style="left:818.60px;top:651.14px;font-size:12px;line-height:14.4px;color:#151515;">Customer 2</div>
<div class="t" style="left:918.60px;top:651.14px;font-size:12px;line-height:14.4px;color:#151515;">$8.40</div>
<div class="t" style="left:993.60px;top:651.14px;font-size:12px;line-height:14.4px;color:#151515;">-1</div>
<div class="t" style="left:1068.60px;top:651.14px;font-size:12px;line-height:14.4px;color:#151515;">1,069</div>
<div class="t" style="left:1162.60px;top:651.14px;font-size:12px;line-height:14.4px;color:#151515;">1,068</div>
<div class="t" style="left:1255.60px;top:651.14px;font-size:12px;line-height:14.4px;color:#151515;">O-2</div>
<div class="r" style="left:1390.9px;top:646.7px;width:99.8px;height:21px;background:#2196f3;border-radius:3px;"></div>
<div class="t" style="left:1397.30px;top:651.14px;font-size:12px;line-height:14.4px;color:#fff;transform:scaleX(0.9900);transform-origin:0 0;">Allocated for SO</div>
<div class="t" style="left:1536.60px;top:651.14px;font-size:12px;line-height:14.4px;color:#151515;">Odessa</div>
<div class="t" style="left:638.60px;top:679.14px;font-size:12px;line-height:14.4px;color:#151515;">12/15/2020</div>
<div class="t" style="left:718.90px;top:679.14px;font-size:12px;line-height:14.4px;color:#005e98;font-weight:700;transform:scaleX(0.9290);transform-origin:0 0;">Inventory adjus...</div>
<div class="t" style="left:993.60px;top:679.14px;font-size:12px;line-height:14.4px;color:#151515;">600</div>
<div class="t" style="left:1068.60px;top:679.14px;font-size:12px;line-height:14.4px;color:#151515;">469</div>
<div class="t" style="left:1162.60px;top:679.14px;font-size:12px;line-height:14.4px;color:#151515;">1,069</div>
<div class="t" style="left:1255.60px;top:679.14px;font-size:12px;line-height:14.4px;color:#151515;">O-3</div>
<div class="r" style="left:1410.7px;top:674.7px;width:60px;height:21px;background:#4caf50;border-radius:3px;"></div>
<div class="t" style="left:1410.70px;top:679.14px;font-size:12px;line-height:14.4px;color:#fff;width:60px;text-align:center;">In</div>
<div class="t" style="left:1536.60px;top:679.14px;font-size:12px;line-height:14.4px;color:#151515;">Odessa</div>
<div class="t" style="left:638.60px;top:707.14px;font-size:12px;line-height:14.4px;color:#151515;">12/15/2020</div>
<div class="t" style="left:718.60px;top:707.14px;font-size:12px;line-height:14.4px;color:#005e98;">SO-0026840</div>
<div class="t" style="left:818.60px;top:707.14px;font-size:12px;line-height:14.4px;color:#151515;">Customer 1</div>
<div class="t" style="left:918.60px;top:707.14px;font-size:12px;line-height:14.4px;color:#151515;">$8.40</div>
<div class="t" style="left:993.60px;top:707.14px;font-size:12px;line-height:14.4px;color:#151515;">-3</div>
<div class="t" style="left:1068.60px;top:707.14px;font-size:12px;line-height:14.4px;color:#151515;">472</div>
<div class="t" style="left:1162.60px;top:707.14px;font-size:12px;line-height:14.4px;color:#151515;">469</div>
<div class="t" style="left:1255.60px;top:707.14px;font-size:12px;line-height:14.4px;color:#151515;">O-2</div>
<div class="r" style="left:1390.9px;top:702.7px;width:99.8px;height:21px;background:#2196f3;border-radius:3px;"></div>
<div class="t" style="left:1397.30px;top:707.14px;font-size:12px;line-height:14.4px;color:#fff;transform:scaleX(0.9900);transform-origin:0 0;">Allocated for SO</div>
<div class="t" style="left:1536.60px;top:707.14px;font-size:12px;line-height:14.4px;color:#151515;">Odessa</div>
<div class="t" style="left:638.60px;top:735.14px;font-size:12px;line-height:14.4px;color:#151515;">12/15/2020</div>
<div class="t" style="left:718.60px;top:735.14px;font-size:12px;line-height:14.4px;color:#005e98;">SO-0026835</div>
<div class="t" style="left:818.60px;top:735.14px;font-size:12px;line-height:14.4px;color:#151515;">Customer 1</div>
<div class="t" style="left:918.60px;top:735.14px;font-size:12px;line-height:14.4px;color:#151515;">$8.40</div>
<div class="t" style="left:993.60px;top:735.14px;font-size:12px;line-height:14.4px;color:#151515;">-1</div>
<div class="t" style="left:1162.60px;top:735.14px;font-size:12px;line-height:14.4px;color:#151515;">472</div>
<div class="t" style="left:1255.60px;top:735.14px;font-size:12px;line-height:14.4px;color:#151515;">O-2</div>
<div class="r" style="left:1410.7px;top:730.7px;width:60px;height:21px;background:#f44336;border-radius:3px;"></div>
<div class="t" style="left:1410.70px;top:735.14px;font-size:12px;line-height:14.4px;color:#fff;width:60px;text-align:center;">Out</div>
<div class="t" style="left:1536.60px;top:735.14px;font-size:12px;line-height:14.4px;color:#151515;">Odessa</div>
<div class="t" style="left:638.60px;top:763.14px;font-size:12px;line-height:14.4px;color:#151515;">12/11/2020</div>
<div class="t" style="left:718.60px;top:763.14px;font-size:12px;line-height:14.4px;color:#005e98;">SO-0026826</div>
<div class="t" style="left:818.60px;top:763.14px;font-size:12px;line-height:14.4px;color:#151515;">Customer 1</div>
<div class="t" style="left:918.60px;top:763.14px;font-size:12px;line-height:14.4px;color:#151515;">$8.40</div>
<div class="t" style="left:993.60px;top:763.14px;font-size:12px;line-height:14.4px;color:#151515;">-25</div>
<div class="t" style="left:1068.60px;top:763.14px;font-size:12px;line-height:14.4px;color:#151515;">498</div>
<div class="t" style="left:1162.60px;top:763.14px;font-size:12px;line-height:14.4px;color:#151515;">473</div>
<div class="t" style="left:1255.60px;top:763.14px;font-size:12px;line-height:14.4px;color:#151515;">O-2</div>
<div class="r" style="left:1390.9px;top:758.7px;width:99.8px;height:21px;background:#2196f3;border-radius:3px;"></div>
<div class="t" style="left:1397.30px;top:763.14px;font-size:12px;line-height:14.4px;color:#fff;transform:scaleX(0.9900);transform-origin:0 0;">Allocated for SO</div>
<div class="t" style="left:1536.60px;top:763.14px;font-size:12px;line-height:14.4px;color:#151515;">Odessa</div>
<svg class="r" style="left:1039.9px;top:704.9px" width="16" height="16"><circle cx="8" cy="8" r="6.1" fill="none" stroke="#d32f2f" stroke-width="1.7"/><rect x="7" y="4.3" width="2" height="4.9" fill="#d32f2f"/><rect x="7" y="10.3" width="2" height="1.9" fill="#d32f2f"/></svg>
</div>
<div class="r" style="left:1340.5px;top:173.2px;width:124.29999999999995px;height:60.400000000000006px;border:3px solid #ff0000;border-radius:2px"></div>
<div class="r" style="left:1030px;top:698.2px;width:108.79999999999995px;height:76.79999999999995px;border:3px solid #ff0000;border-radius:2px"></div>
<div class="r" style="left:1364.3px;top:208px;width:74.5px;height:22.599999999999994px;border:1px solid #767676;background:#f1f2f7"></div>
<div class="t" style="left:1371.10px;top:213.76px;font-size:12.4px;line-height:14.88px;color:#1e1e3c;transform:scaleX(0.9361);transform-origin:0 0;">Damaged: 4</div>
<div class="r" style="left:1047px;top:735.1px;width:80.79999999999995px;height:22.699999999999932px;border:1px solid #767676;background:#f1f2f7"></div>
<div class="t" style="left:1053.60px;top:740.76px;font-size:12.4px;line-height:14.88px;color:#1e1e3c;transform:scaleX(0.9310);transform-origin:0 0;">Damage 10%</div>
</body></html>
